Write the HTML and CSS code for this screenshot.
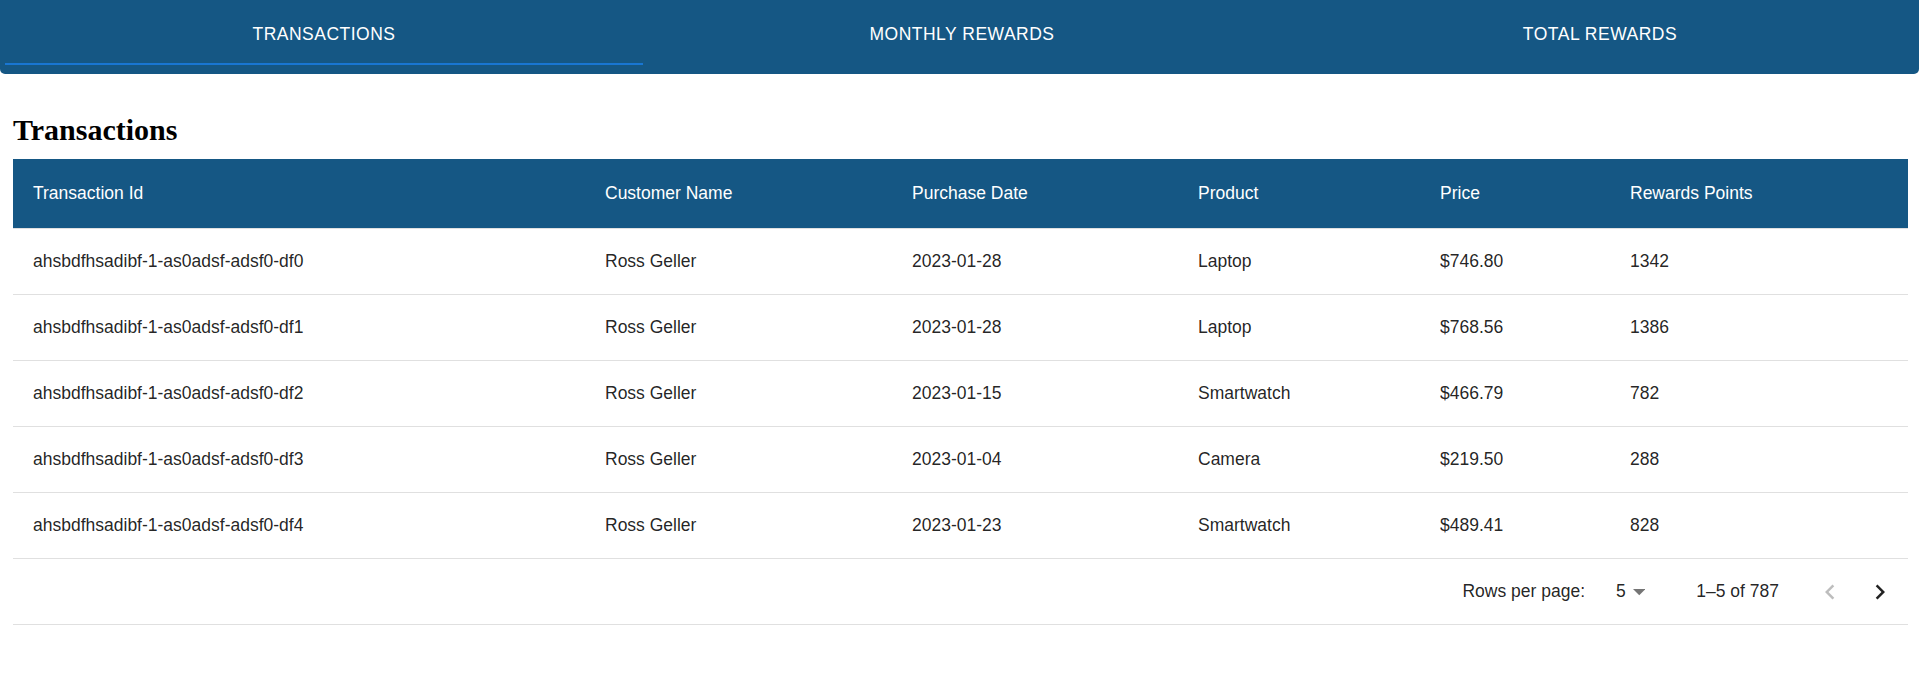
FILE: index.html
```html
<!DOCTYPE html>
<html lang="en">
<head>
<meta charset="utf-8">
<title>Rewards</title>
<link rel="stylesheet" href="styles.css">
</head>
<body>
<header class="appbar">
  <nav class="tabs">
    <div class="tab tab-active">Transactions</div>
    <div class="tab">Monthly Rewards</div>
    <div class="tab">Total Rewards</div>
  </nav>
</header>
<main class="content">
  <h2 class="title">Transactions</h2>
  <table class="grid">
    <colgroup>
      <col class="c-id"><col class="c-name"><col class="c-date"><col class="c-prod"><col class="c-price"><col>
    </colgroup>
    <thead>
      <tr><th>Transaction Id</th><th>Customer Name</th><th>Purchase Date</th><th>Product</th><th>Price</th><th>Rewards Points</th></tr>
    </thead>
    <tbody>
      <tr><td>ahsbdfhsadibf-1-as0adsf-adsf0-df0</td><td>Ross Geller</td><td>2023-01-28</td><td>Laptop</td><td>$746.80</td><td>1342</td></tr>
      <tr><td>ahsbdfhsadibf-1-as0adsf-adsf0-df1</td><td>Ross Geller</td><td>2023-01-28</td><td>Laptop</td><td>$768.56</td><td>1386</td></tr>
      <tr><td>ahsbdfhsadibf-1-as0adsf-adsf0-df2</td><td>Ross Geller</td><td>2023-01-15</td><td>Smartwatch</td><td>$466.79</td><td>782</td></tr>
      <tr><td>ahsbdfhsadibf-1-as0adsf-adsf0-df3</td><td>Ross Geller</td><td>2023-01-04</td><td>Camera</td><td>$219.50</td><td>288</td></tr>
      <tr><td>ahsbdfhsadibf-1-as0adsf-adsf0-df4</td><td>Ross Geller</td><td>2023-01-23</td><td>Smartwatch</td><td>$489.41</td><td>828</td></tr>
    </tbody>
  </table>
  <div class="pager">
    <span class="pager-label">Rows per page:</span>
    <span class="pager-select">5<svg class="drop" viewBox="7 10 10 5" width="12.5" height="6.25"><path d="M7 10l5 5 5-5z"/></svg></span>
    <span class="pager-count">1–5 of 787</span>
    <span class="pager-actions">
      <span class="icon-btn disabled"><svg viewBox="0 0 24 24" width="30" height="30"><path d="M15.41 16.59 10.83 12l4.58-4.59L14 6l-6 6 6 6 1.41-1.41z"/></svg></span>
      <span class="icon-btn"><svg viewBox="0 0 24 24" width="30" height="30"><path d="M8.59 16.59 13.17 12 8.59 7.41 10 6l6 6-6 6-1.41-1.41z"/></svg></span>
    </span>
  </div>
</main>
</body>
</html>
```

FILE: styles.css
```css
html, body {
  margin: 0;
  padding: 0;
  background: #ffffff;
}

body {
  font-family: "Liberation Sans", Arial, sans-serif;
  color: rgba(0, 0, 0, 0.87);
}

.appbar {
  background: #155784;
  padding: 4px 0 9px 5px;
  border-radius: 0 0 5px 5px;
}

.tabs {
  display: flex;
}

.tab {
  flex: 1 1 0;
  height: 61px;
  display: flex;
  align-items: center;
  justify-content: center;
  color: #ffffff;
  font-size: 17.5px;
  letter-spacing: 0.5px;
  text-transform: uppercase;
  box-sizing: border-box;
  border-bottom: 2.5px solid transparent;
  padding-top: 1px;
}

.tab-active {
  border-bottom-color: #1976d2;
}

.content {
  padding: 0 11px 0 13px;
}

.title {
  font-family: "Liberation Serif", "Times New Roman", serif;
  font-weight: bold;
  font-size: 30px;
  line-height: 34px;
  margin: 39px 0 12px 0;
  color: #000000;
}

.grid {
  width: 100%;
  border-collapse: collapse;
  table-layout: fixed;
  font-size: 17.5px;
}

.c-id { width: 572px; }
.c-name { width: 307px; }
.c-date { width: 286px; }
.c-prod { width: 242px; }
.c-price { width: 190px; }

.grid th {
  background: #155784;
  color: #ffffff;
  font-weight: normal;
  text-align: left;
  padding: 20px;
  line-height: 29px;
  border-bottom: 1px solid #e0e0e0;
}

.grid td {
  padding: 20px;
  line-height: 25px;
  border-bottom: 1px solid #e0e0e0;
  white-space: nowrap;
}

.pager {
  display: flex;
  align-items: center;
  justify-content: flex-end;
  height: 65px;
  border-bottom: 1px solid #e0e0e0;
  padding-right: 13px;
  font-size: 17.5px;
}

.pager-select {
  display: flex;
  align-items: center;
  margin-left: 31px;
}

.drop {
  fill: rgba(0, 0, 0, 0.54);
  margin-left: 7px;
  margin-top: 2px;
}

.pager-count {
  margin-left: 51px;
}

.pager-actions {
  display: flex;
  gap: 20px;
  margin-left: 36px;
}

.icon-btn {
  display: flex;
  width: 30px;
  height: 30px;
  fill: #222222;
}

.icon-btn.disabled {
  fill: rgba(0, 0, 0, 0.26);
}
```
